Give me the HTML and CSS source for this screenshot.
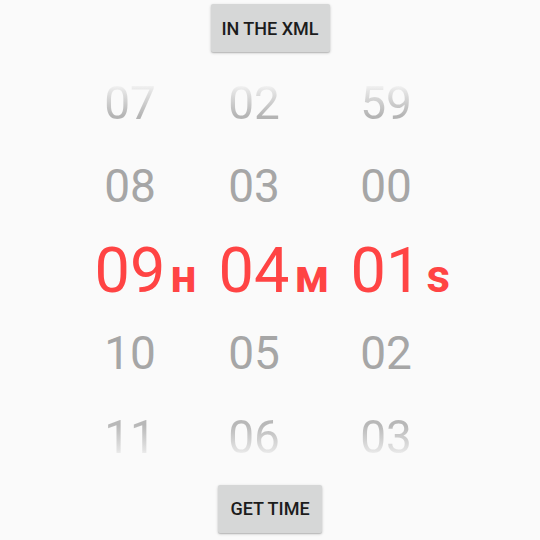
FILE: index.html
```html
<!DOCTYPE html>
<html>
<head>
<meta charset="utf-8">
<link rel="stylesheet" href="styles.css">
</head>
<body>
<div class="screen">
  <button class="btn btn-top">IN THE XML</button>
  <div class="wheels">
    <div class="wheel w-h">
      <div class="cell far-top">07</div>
      <div class="cell near">08</div>
      <div class="cell sel">09<span class="unit">н</span></div>
      <div class="cell near">10</div>
      <div class="cell far-bot">11</div>
    </div>
    <div class="wheel w-m">
      <div class="cell far-top">02</div>
      <div class="cell near">03</div>
      <div class="cell sel">04<span class="unit">м</span></div>
      <div class="cell near">05</div>
      <div class="cell far-bot">06</div>
    </div>
    <div class="wheel w-s">
      <div class="cell far-top">59</div>
      <div class="cell near">00</div>
      <div class="cell sel">01<span class="unit">s</span></div>
      <div class="cell near">02</div>
      <div class="cell far-bot">03</div>
    </div>
  </div>
  <button class="btn btn-bottom">GET TIME</button>
</div>
</body>
</html>
```

FILE: styles.css
```css
html, body {
  margin: 0;
  padding: 0;
  background: #fafafa;
}
.screen {
  width: 540px;
  height: 540px;
  display: flex;
  flex-direction: column;
  align-items: center;
  font-family: Roboto, "Noto Sans", sans-serif;
}
.btn {
  height: 48px;
  border: none;
  border-radius: 2px;
  background: #d6d7d7;
  color: #1c1c1c;
  font-family: Roboto, sans-serif;
  font-weight: 500;
  font-size: 18px;
  padding: 0;
  box-shadow: 0 1px 3px rgba(0,0,0,0.22), 0 1px 1px rgba(0,0,0,0.12);
}
.btn-top {
  margin-top: 4px;
  width: 119px;
}
.btn-bottom {
  margin-top: 6px;
  width: 104px;
}
.wheels {
  margin-top: 10px;
  align-self: stretch;
  padding-left: 68px;
  display: grid;
  grid-template-columns: 124px 124px 140px;
}
.wheel {
  display: flex;
  flex-direction: column;
}
.cell {
  height: 83.4px;
  line-height: 83.4px;
  text-align: center;
  font-size: 46px;
  color: #a6a6a6;
  white-space: nowrap;
}
.far-top {
  background: linear-gradient(to bottom, #fafafa 25%, #e4e4e4 35%, #b4b4b4 65%);
  -webkit-background-clip: text;
  background-clip: text;
  color: transparent;
}
.far-bot {
  background: linear-gradient(to bottom, #b8b8b8 35%, #e2e2e2 65%, #fafafa 75%);
  -webkit-background-clip: text;
  background-clip: text;
  color: transparent;
}
.sel {
  font-size: 63px;
  color: #ff4444;
}
.unit {
  display: inline-block;
  width: 0;
  margin-left: 5px;
  margin-right: -5px;
  font-size: 46px;
  font-weight: 700;
}
```
